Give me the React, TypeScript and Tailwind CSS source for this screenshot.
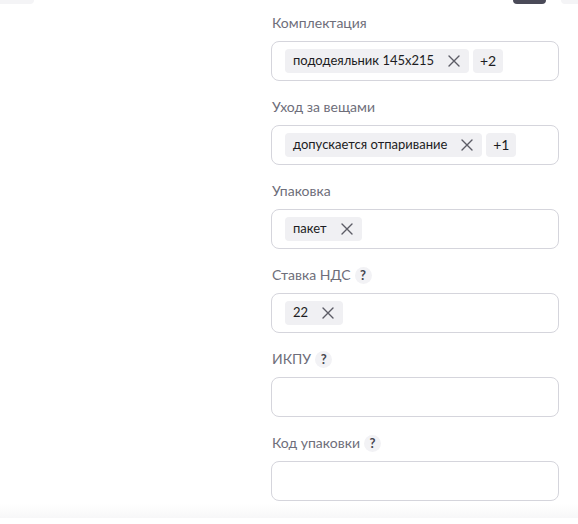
import React from "react";

type Field = {
  label: string;
  hint?: boolean;
  chips?: string[];
  more?: number;
};

const fields: Field[] = [
  { label: "Комплектация", chips: ["пододеяльник 145x215"], more: 2 },
  { label: "Уход за вещами", chips: ["допускается отпаривание"], more: 1 },
  { label: "Упаковка", chips: ["пакет"] },
  { label: "Ставка НДС", hint: true, chips: ["22"] },
  { label: "ИКПУ", hint: true },
  { label: "Код упаковки", hint: true },
];

function CloseIcon() {
  return (
    <svg width="12" height="12" viewBox="0 0 12 12" fill="none" stroke="#5c5c66" strokeWidth="1.4" strokeLinecap="round">
      <path d="M1 1 L11 11 M11 1 L1 11" />
    </svg>
  );
}

function Hint() {
  return (
    <span className="ml-[4px] inline-flex h-[17px] w-[17px] items-center justify-center rounded-full bg-[#f2f2f5] text-[13px] font-bold leading-none text-[#45454f]">
      ?
    </span>
  );
}

export default function App() {
  return (
    <div className="relative h-[524px] w-[578px] overflow-hidden bg-white font-['Lato','Noto_Sans',sans-serif]">
      {/* header buttons peeking above the form */}
      <div className="flex h-[4px] items-start">
        <div className="h-[4px] w-[34px] rounded-br-[6px] bg-[#f4f4f6]" />
        <div className="ml-auto h-[4px] w-[33px] rounded-b-[8px] bg-[#4a4a58]" />
        <div className="ml-[15px] h-[4px] w-[17px] rounded-bl-[8px] bg-[#f4f4f6]" />
      </div>

      <div className="flex flex-col pl-[271px] pt-[9px]">
        {fields.map((f) => (
          <div key={f.label} className="mb-[16px] flex w-[288px] flex-col">
            <div className="flex h-[20px] items-center pl-[1px] text-[14px] leading-[20px] text-[#6e6e7a]">
              {f.label}
              {f.hint && <Hint />}
            </div>
            <div className="mt-[8px] flex h-[40px] items-center gap-[4px] rounded-[8px] border border-[#d5d5dc] bg-white px-[13px]">
              {f.chips?.map((c) => (
                <span
                  key={c}
                  className="flex h-[24px] items-center gap-[14px] rounded-[4px] bg-[#f0f0f3] pl-[8px] pr-[9px] text-[13px] text-[#1c1c22]"
                >
                  {c}
                  <CloseIcon />
                </span>
              ))}
              {f.more && (
                <span className="flex h-[24px] w-[30px] items-center justify-center rounded-[4px] bg-[#f0f0f3] pb-[1px] text-[14px] leading-none text-[#1c1c22]">
                  +{f.more}
                </span>
              )}
            </div>
          </div>
        ))}
      </div>

      {/* footer shadow strip */}
      <div className="absolute bottom-[6px] left-0 right-0 h-[14px] bg-gradient-to-b from-white to-[#f7f7f8]" />
    </div>
  );
}
